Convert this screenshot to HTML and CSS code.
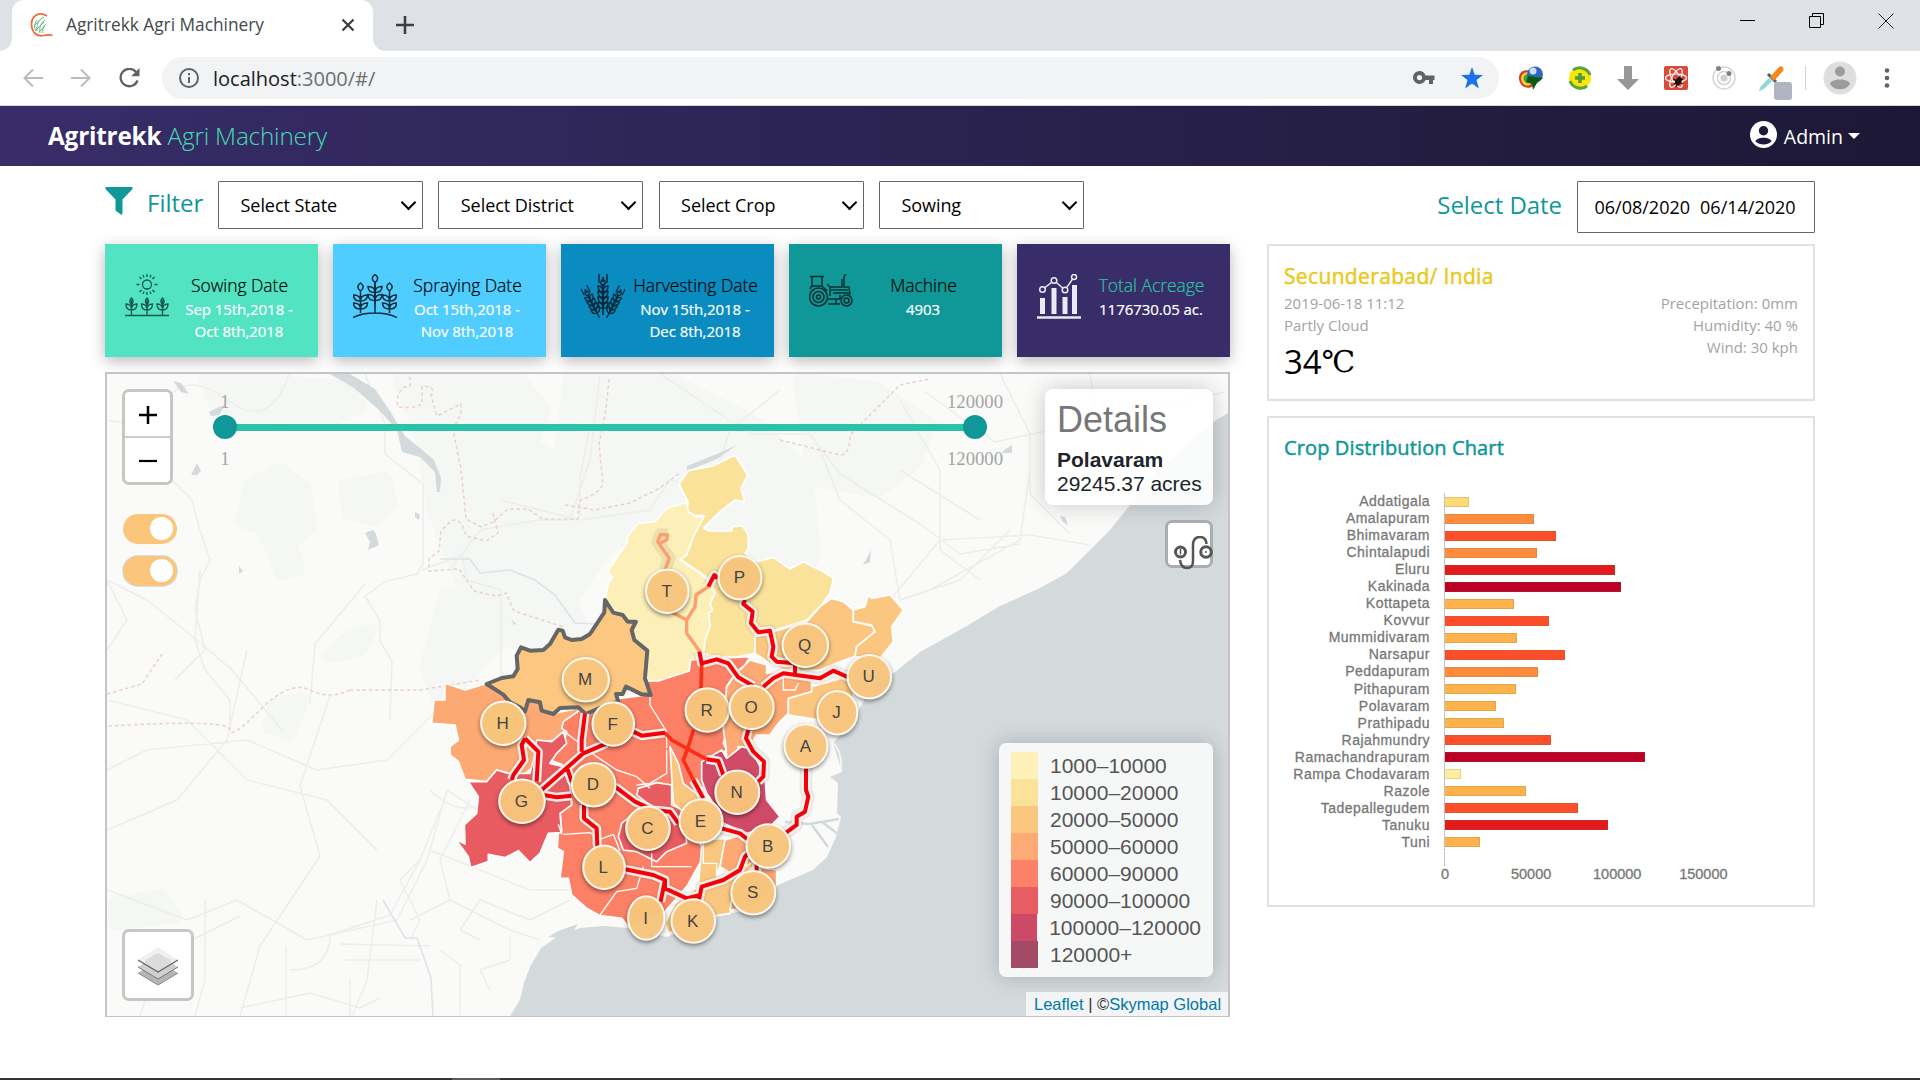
FILE: index.html
```html
<!DOCTYPE html>
<html lang="en">
<head>
<meta charset="utf-8">
<title>Agritrekk Agri Machinery</title>
<link rel="stylesheet" href="styles.css">
</head>
<body>
<div class="tabstrip">
  <div class="tab">
    <svg class="favicon" width="24" height="26" viewBox="0 0 24 26" fill="none"><path d="M17 4C9-1 1 4 1.500 13c.5 8 6 12 12 10.500 4-1 6-1 9 0" stroke="#f0693c" stroke-width="1.800"/><path d="M14 5c-5 2-8 8-7 14M15 8c-4 3-6 7-5 13M16 12c-3 2-4 5-3 9M7 8c-3 4-3 8-1 11M12 6l-7 7M14 10l-8 8M15 14l-6 6" stroke="#62b982" stroke-width="1"/></svg>
    <span class="tab-title">Agritrekk Agri Machinery</span>
    <svg class="tab-close" width="14" height="14" viewBox="0 0 14 14"><path d="M1.500 1.500l11 11M12.500 1.500l-11 11" stroke="#3c4043" stroke-width="2.300"/></svg>
  </div>
  <svg class="newtab" width="18" height="18" viewBox="0 0 18 18"><path d="M9 0v18M0 9h18" stroke="#3c4043" stroke-width="2.600"/></svg>
  <div class="winbtns">
    <svg width="16" height="16" viewBox="0 0 16 16"><path d="M0 7.500h15" stroke="#000"/></svg>
    <svg width="16" height="16" viewBox="0 0 16 16" fill="none" stroke="#000"><path d="M.5 3.500h11v11H.5zM3.500 3.500v-3h11v11h-3"/></svg>
    <svg width="16" height="16" viewBox="0 0 16 16"><path d="M.5.5l15 15M15.500.5l-15 15" stroke="#222"/></svg>
  </div>
</div>
<div class="toolbar">
  <svg class="nav-ic" width="20" height="20" viewBox="0 0 20 20" fill="none" stroke="#b9bbbe" stroke-width="2"><path d="M20 10H2M10 1.500L1.500 10l8.500 8.500"/></svg>
  <svg class="nav-ic" width="20" height="20" viewBox="0 0 20 20" fill="none" stroke="#b9bbbe" stroke-width="2"><path d="M0 10h18M10 1.500L18.500 10 10 18.500"/></svg>
  <svg class="nav-ic" width="21" height="20" viewBox="0 0 21 20"><path d="M17.200 4.200A8.700 8.700 0 1 0 18.500 12.500" fill="none" stroke="#5f6368" stroke-width="2.300"/><path d="M20.500 0v8.300h-8.300z" fill="#5f6368"/></svg>
  <div class="omnibox">
    <svg width="22" height="22" viewBox="0 0 22 22"><circle cx="11" cy="11" r="9" fill="none" stroke="#5f6368" stroke-width="2"/><path d="M11 10v6M11 6v2.200" stroke="#5f6368" stroke-width="2"/></svg>
    <span class="url">localhost<i>:3000/#/</i></span>
    <svg class="key" width="22" height="14" viewBox="0 0 22 14"><path fill="#5f6368" fill-rule="evenodd" d="M6.500 0a6.500 6.500 0 0 1 6 4.500H21.500v4.500H20v4h-4v-4h-3.500A6.500 6.500 0 1 1 6.500 0zm0 4a2.600 2.600 0 1 0 0 5.200 2.600 2.600 0 0 0 0-5.200z"/></svg>
    <svg class="star" width="22" height="22" viewBox="0 0 22 22"><path fill="#1a73e8" d="M11 0l2.700 7.700 8.300.3-6.500 5 2.300 8.500L11 16.500 4.200 21.500 6.500 13 0 8l8.300-.3z"/></svg>
  </div>
  <div class="exts">
    <svg width="26" height="26" viewBox="0 0 26 26"><path d="M1 13c0-7 7-10 13-6l2 13c-5 6-15 2-15-7z" fill="#d43c2e"/><path d="M3 13c1-6 7-7 10-4v10c-4 4-10 0-10-6z" fill="#f4d42a"/><path d="M5.500 13c1-4 5-5 8-3v7c-4 3-8 0-8-4z" fill="#3ba43a"/><circle cx="17" cy="9.500" r="8" fill="#2f68c0"/><circle cx="15" cy="6" r="3.500" fill="#c8e0f5"/><path d="M10 11l15 2-6 5-4 7-1-6-6-2z" fill="#0c5a12"/></svg>
    <svg width="24" height="24" viewBox="0 0 24 24"><circle cx="12" cy="12" r="11" fill="#fbe60a"/><path d="M5 4A11 11 0 0 1 22 9M2 15a11 11 0 0 0 17 5" fill="none" stroke="#5aa43f" stroke-width="3"/><path d="M12 7v10M7 12h10" stroke="#4b9a3c" stroke-width="3.500"/></svg>
    <svg width="24" height="24" viewBox="0 0 24 24"><path d="M8 0h8v13h7L12 24 1 13h7z" fill="#979797"/></svg>
    <svg width="24" height="24" viewBox="0 0 24 24"><rect width="24" height="24" rx="2" fill="#da4a3b"/><g fill="none" stroke="#fff" stroke-width="1.200"><ellipse cx="12" cy="12" rx="10.500" ry="4"/><ellipse cx="12" cy="12" rx="10.500" ry="4" transform="rotate(60 12 12)"/><ellipse cx="12" cy="12" rx="10.500" ry="4" transform="rotate(120 12 12)"/></g><ellipse cx="14.500" cy="15" rx="3" ry="4.500" transform="rotate(30 14 15)" fill="#1b1110"/><path d="M9 13l10 5M10 18l9-5M12 21l4-11" stroke="#1b1110" stroke-width="1.200"/></svg>
    <svg width="24" height="24" viewBox="0 0 24 24"><circle cx="12" cy="12" r="11" fill="none" stroke="#d5d6d8" stroke-width="1.500"/><circle cx="12" cy="12" r="6.500" fill="none" stroke="#d5d6d8" stroke-width="1.500"/><circle cx="12" cy="12" r="3.500" fill="#cfd1d3"/><circle cx="6.500" cy="2.500" r="2.500" fill="#7f8285"/><circle cx="17" cy="7.500" r="2.500" fill="#7f8285"/></svg>
    <svg width="34" height="34" viewBox="0 0 34 34"><path d="M1 25c1-5 4-7 10-13l3 3c-6 6-8 9-13 10z" fill="#8fd9d6"/><path d="M10 8l8 8" stroke="#41617c" stroke-width="3"/><path d="M12 11l9-10c2-2 6 1 4 4l-9 10z" fill="#f5871f"/><rect x="16" y="16" width="18" height="18" rx="3" fill="#b0b5c1"/></svg>
  </div>
  <span class="tb-sep"></span>
  <svg class="avatar" width="34" height="34" viewBox="0 0 34 34"><circle cx="17" cy="17" r="16.500" fill="#dedede"/><circle cx="17" cy="10.500" r="5" fill="#9c9c9c"/><path d="M7 23c1-6 19-6 20 0-4 7-16 7-20 0z" fill="#9c9c9c"/></svg>
  <svg class="dots" width="6" height="20" viewBox="0 0 6 20" fill="#5f6368"><circle cx="3" cy="2.500" r="2.300"/><circle cx="3" cy="10" r="2.300"/><circle cx="3" cy="17.500" r="2.300"/></svg>
</div>
<header class="appbar">
  <div class="brand"><b>Agritrekk</b> <span>Agri Machinery</span></div>
  <div class="admin">
    <svg width="27" height="27" viewBox="0 0 27 27"><circle cx="13.500" cy="13.500" r="13.500" fill="#fff"/><circle cx="13.500" cy="9.700" r="4.700" fill="#1f1a3c"/><path d="M5.500 20.500c1-5 15-5 16 0-4 4-12 4-16 0z" fill="#1f1a3c"/></svg>
    <span>Admin</span><i class="caret"></i>
  </div>
</header>
<main class="page">
  <section class="left">
    <div class="filters">
      <svg class="funnel" width="28" height="28" viewBox="0 0 28 28"><path fill="#109898" d="M1.500 0h25c1.500 0 1.500 1.500.8 2.300L17.500 12.500v14c0 1-1 1.500-2 .8l-4-3c-.7-.5-1-.8-1-1.800v-10L.7 2.300C0 1.500 0 0 1.500 0z"/></svg>
      <span class="flabel">Filter</span>
      <div class="select">Select State</div>
      <div class="select">Select District</div>
      <div class="select">Select Crop</div>
      <div class="select">Sowing</div>
    </div>
    <div class="cards">
      <div class="card sow">
        <svg width="44" height="44" viewBox="0 0 44 44" fill="none" stroke="#17584b" stroke-width="1.300"><circle cx="22" cy="10.500" r="4.500"/><path d="M22 0v3M22 18v3M11.500 10.500h3M29.500 10.500h3M14.500 3l2 2M27.500 16l2 2M29.500 3l-2 2M16.500 16l-2 2M18 1l1 2.500M26 1l-1 2.500M18 20l1-2.500M26 20l-1-2.500"/><g id="sprout"><path d="M6.500 41V26M6.500 36c-4 0-5.500-2-5.500-6 4 0 5.500 2 5.500 6zM6.500 36c4 0 5.500-2 5.500-6-4 0-5.500 2-5.500 6zM6.500 31c-2.500-3-2-5 0-7 2 2 2.500 4 0 7z"/></g><use href="#sprout" x="15.500"/><use href="#sprout" x="31"/><path d="M0 41.500h44"/></svg>
        <div class="ctext"><h4>Sowing Date</h4><p>Sep 15th,2018 -<br>Oct 8th,2018</p></div>
      </div>
      <div class="card spray">
        <svg width="44" height="44" viewBox="0 0 44 44" fill="none" stroke="#0b2a3a" stroke-width="1.500"><path d="M0 43.500c12-6 32-6 44 0M22 39V9"/><g id="stalk"><path d="M7.500 39V17M7.500 17c-4-3-3-6 0-8 3 2 4 5 0 8zM7.500 27c-5 0-7-2-7-6 5 0 7 2 7 6zM7.500 27c5 0 7-2 7-6-5 0-7 2-7 6zM7.500 35c-5 0-7-2-7-6 5 0 7 2 7 6zM7.500 35c5 0 7-2 7-6-5 0-7 2-7 6z"/></g><use href="#stalk" x="29"/><use href="#stalk" x="14.500" y="-8.500"/></svg>
        <div class="ctext"><h4>Spraying Date</h4><p>Oct 15th,2018 -<br>Nov 8th,2018</p></div>
      </div>
      <div class="card harvest">
        <svg width="44" height="44" viewBox="0 0 44 44" fill="none" stroke="#05283a" stroke-width="1.500"><g id="ear"><path d="M22 41V10M18 0v9M22 3v5M26 0v9M22 12c-3-2-3-5 0-7 3 2 3 5 0 7z"/><path id="grain" d="M22 18c-4 0-5-2-5-6 4 0 5 2 5 6 0-4 1-6 5-6 0 4-1 6-5 6z"/><use href="#grain" y="5.500"/><use href="#grain" y="11"/><use href="#grain" y="16.500"/></g><use href="#ear" transform="translate(-4 5) rotate(-27 22 38) scale(.85) translate(4 5)"/><use href="#ear" transform="translate(4 5) rotate(27 22 38) scale(.85) translate(4 5)"/></svg>
        <div class="ctext"><h4>Harvesting Date</h4><p>Nov 15th,2018 -<br>Dec 8th,2018</p></div>
      </div>
      <div class="card machine">
        <svg width="44" height="44" viewBox="0 0 44 44" fill="none" stroke="#062f2f" stroke-width="1.500"><circle cx="9.500" cy="23" r="9"/><circle cx="9.500" cy="23" r="5.500"/><circle cx="9.500" cy="23" r="2"/><circle cx="37.500" cy="26.500" r="5.500"/><circle cx="37.500" cy="26.500" r="2.500"/><path d="M1 2.500h14M3 3v9l-2 3M13 3v10M3 12h10l5 5M18 10l3 3v9M21 13h19l1 8M22 16h17M24 19h16M33 12V5M35 12V5c0-3 0-3 2-5M18 25h13M19 30h12M27 25v5M31 21v4"/></svg>
        <div class="ctext"><h4>Machine</h4><p>4903</p></div>
      </div>
      <div class="card acre">
        <svg width="44" height="45" viewBox="0 0 44 45"><path d="M0 43.500h44" stroke="#e9eaf2" stroke-width="2.500"/><path d="M3 24h5v16H3zM14.500 14h5v26h-5zM25.500 23h5v17h-5zM35 11h5v29h-5z" fill="#e9eaf2"/><path d="M5.500 15.500L17 6.500l11 9.500 9-13" fill="none" stroke="#e9eaf2" stroke-width="1.400"/><g fill="#382d69" stroke="#e9eaf2" stroke-width="1.500"><circle cx="5.500" cy="15.500" r="2.800"/><circle cx="17" cy="6.500" r="2.800"/><circle cx="28" cy="16" r="2.800"/><circle cx="37" cy="3" r="2.500"/></g></svg>
        <div class="ctext"><h4>Total Acreage</h4><p>1176730.05 ac.</p></div>
      </div>
    </div>
    <div class="map">
      <svg class="mapsvg" width="1121" height="642" viewBox="107 374 1121 642">
        <rect x="107" y="374" width="1121" height="642" fill="#fafaf8"/>
        <!-- vegetation tint -->
        <g fill="#f5f7f5" stroke="#f5f7f5" stroke-width="14" stroke-linejoin="round">
          <path d="M205 380h60l80 8 15 18-30 14-50 5-60-10zM400 380h120l24 30-12 36 50 24 18 86-30 46 18 36-30 26-44-22-50-54-30-78-10-66z"/>
          <path d="M250 485l30-15 24 17 6 40-20 16 8 26-16 4-18-44-22-8zM345 486l40-7 6 26-16 14-26-6zM570 380h100l80 40 56 50 8 84-18 50-50 6-40-54-80-18-36 20-36-44zM800 380l74 8 56 36-16 40-36 26-64-10zM115 904l46-8 14 20-60 8zM345 640l25-10-10 20-30 6zM445 596l50-10 18 44-54 54-18 26-14-44zM275 705l28-6-14 34-20-6z"/>
        </g>
        <!-- background roads -->
        <g fill="none" stroke="#ededec" stroke-width="1.500" stroke-linejoin="round">
          <path d="M107 420q40 10 60-20t60 0 60-20 40-6M107 580l40 20 50 40 35 30 50 60M107 580l20 40-20 30M172 480l20 20 8 30 10 30-10 20-5 30 10 40-30 30M200 570l-5 70 10 30 25 30 0 30M365 374l20 50 0 30 38 30 0 80-6 10-30 7-22 15 15 25 0 20 12 20-2 60M365 584l-50 60-5 60M422 570l40-15 5 25 34 10 0 100"/>
          <path d="M450 570l30-40 60-10 30 0 20-60 10-86M500 500l80 20 70-10 20-30 40 10 20-60 50-40M580 517l0-40 10-50M660 374l90 60 60 0 30 40 80 50 40 30 60-10M900 400l40 70 0 80 40 30M890 600l50-60 90-5 60 10M980 520l-80-50M1030 470l-10 70-90 50M1000 374l30 60 0 60 40 40M1090 374l10 60 60 20M820 450l20 50 50 40 10 60 60-20 50-50M925 392l70 50 230-50"/>
          <path d="M107 700l80 20 60 60 80 20 50 50M107 830l70-30 50-60 20-90M107 890l80 30 50-20 70 40 90-20 30-60 20-70 30 20M140 1016l20-60 80-40M240 1016l20-70 60-90-20-70 30-90M205 900l0 80-10 36M290 970q40 0 40-35l60-20 30-55 20-50M286 1016l0-70M340 944l90 2M345 960l75 0M240 1008l70-15 50 15 20-10M350 980l0 36M377 900l-10 80-15 36M440 950l20 15 0 50M410 920l40-20 60 30 30 10M107 770l40-20 100-10 70 30 70-10 60-60M480 940l-20-10 20-30 50 20 40-20M420 860l-20 20 20 40-10 20"/>
          <path d="M430 850l100 40 60 0M470 800l-30 60 10 40M490 990l-10-20 30-10 0-25M430 790q30 30 60 10l60-20"/>
        </g>
        <path d="M383 900l22 38 12 0 14 40 2 38M440 559l30 0 10 14 30-3 25 10 20 15 20 28 50 2" fill="none" stroke="#dfe3e6" stroke-width="1.600"/>
        <!-- state boundary -->
        <g fill="none" stroke="#eccfd3" stroke-width="1.500" stroke-dasharray="3.500 2.800">
          <path d="M409 377q5 10-4 10-10 6-7 20 20 2 24-4l0-17q15 0 9 10l6 20 24-12 0 10-8 15 8 40 5 50 15 8 12-5 15-13 20 0 15 10 35 0q0-20 5-20 15-5 20-15l-4-40 7-35 3-30"/>
          <path d="M493 513l5 20-12 8-20-5q-5-20-15-15l-10 10-2 20-10 8 0 12 30-2 15 22 22 5 10-3 8 18 50 16M565 505l30 5 35-7 30-15 20-15M780 440l60 15q10 0 10-20l50-50 30-6M107 694l35-10 20-30"/>
          <path d="M350 690q-20 10-40 0t-50 20-30 20-100-5-23-3M350 690l70 0 60-10"/>
        </g>
        <g fill="#d4dadc">
          <path d="M330 374l20 0 25 15 15 22 15 25 15 12 14 12 7 18-1 14-3 0-2-20-15-15-18-5-5-22-18-20-25-22z"/>
          <path d="M365 533l8-3 3 4 3 11-11 5 2-8zM191 475l6-12 4 8-4 4zM173 381l8 2 8 11-8-2zM209 412l10-5 6-2-6 10-8 1zM239 566l4 5-4 3zM415 512l5 3-1 5-4-3zM511 619l5 5-2 1zM868 556l3-6-1 12-7 3zM1004 450l8-5 0 8-10 0zM687 466l30-12 20-9-20 14-30 12zM1060 516l5 1 3 8-5-3z"/>
          <path d="M1228 413L1213 422 1183 448 1147 480 1130 505 1110 530 1083 557 1067 573 1040 588 1000 606 965 627 920 652 895 672 869 690 853 722 833 743 842 772 830 777 838 783 837 813 841 817 836 837 827 857 813 870 778 885 753 910 730 913 710 918 667 937 627 928 605 926 580 928 557 937 541 948 530 967 524 983 520 1000 510 1016 1228 1016z"/>
          <path d="M548 937l10-6 20-7-4 6 8-1-22 9z"/>
        </g>
        <path d="M785 822l24 2 30-5M812 825l16 22M822 822l16 12" fill="none" stroke="#d4dadc" stroke-width="2.500"/>
        <path d="M833 743q9 7 8 28" fill="none" stroke="#f4f4f2" stroke-width="2"/>
        <!-- mandals -->
        <g transform="translate(420 440) scale(.33333)" stroke="#fff" stroke-width="5" stroke-linejoin="round">
          <path fill="#fae29b" d="M945 45l38 60-20 40 11 40-29-5-45 35-50 50 20 8 65 0 3-13 30-2 17 27 0 40-10 15 35 25 50-13 50 35 40-22 60 30 30 20-10 45-30 40-40 40-155 50 0 50-60 12-75-5-25-10 10-40 15-40-5-40 5-30 15-30-20-40-25-20-60-40 20-15 20-55 32-60-27 0-25-15 5-25-28-55 28-40 75-15z"/>
          <path fill="#fcefb7" d="M800 187l5 28 20 15 27 0-32 60-20 55-20 15 60 40 25 20 20 40-15 30 8 20-13 10 5 40-15 40-5 60-40 5-2 30-93 30-35-5 5-90-45-30-5-30 13-25-28 0-65-65 10-50 13-18-15-17 57-85 2-20 33-40 50-5 35-40z"/>
          <path fill="#fda973" d="M75 730L135 750 200 730 250 762 315 812 325 782 360 785 400 820 500 800 440 850 435 880 400 900 385 905 350 985 340 980 300 1015 265 1000 230 990 200 1025 135 1018 115 965 90 945 90 920 115 900 105 855 35 850 42 780 75 780z"/>
          <path fill="#fc8066" d="M600 775l80-10 10 0-10-42 35 0 93-30 4-33 68-4 110-6-15 25-30 25-25 40 0 130-10 40 10 20-70 40 0 70-30 40 30 130-5 50-45 80-65 75-110 45-20-25-65-8-40-22-45-40-10-50-25 0 10-80-18-10 3-47 10-8-5-55 35-25-5-55-20-60-40-15 40-45 10-40-15-10 5-20 50-35z"/>
          <path fill="#e85c61" d="M145 1025L200 1025 230 990 265 1000 330 1000 345 940 350 900 395 905 430 875 440 910 410 940 390 970 430 980 450 1040 455 1095 420 1120 425 1178 385 1180 360 1240 330 1268 295 1232 255 1253 205 1243 205 1265 152 1283 145 1250 107 1198 135 1212 133 1155 170 1120 175 1070z"/>
          <path fill="#e85c61" d="M655 1045l55-17 45 7 0 60 35 15 10 100-60 25-30 30-60-30-40-5-15-40 10-40 35-30 50-25-40-30z"/>
          <path fill="#fda973" d="M920 740l25-35 45-45 50 15 0 25 60-10 75 35 0 30-70 25 0 40-30 30-25 35-40 0-25 40-30-5-10 30-25 5-2-35-8-50z"/>
          <path fill="#fbc780" d="M1005 590l55-15 100-30 40-45 35-25 35 10 30 25 0 35 65 15-5 20-50 40-5 30-45 15-60 25-100 5-50-25-45-30z"/>
          <path fill="#fbc780" d="M1300 510l35-10 10-35 10 10 55-10 40 45-35 50 5 45-40 50-75-5 5-30 55-45-10-20-55-10z"/>
          <path fill="#fbc780" d="M1175 740l105-30 20 40 0 80-100 10-95-15 0-50 70-20z"/>
          <path fill="#d04a67" d="M845 965l60-35 15 25 45-35 20 5 25 35 25 50 5 70 40 50-30 30-70 20-70-30-30-60-20-30-15-40z"/>
          <path fill="#fbc780" d="M750 920l25 50 15 60 50 40 10 30 0 100 70-5 0 25-15 45-15 40 70-15 50-70 15 60-75 80-20 60-60 10-125 50-10-30 30-60 70-50 10-120-50-100-35-30z"/>
          <path fill="#fda973" d="M915 1200l65-20 40 70-80 55-40-25zM930 1410l10-60 60-70 70 10 0 45-70 65z"/>
          <path fill="none" stroke-width="4" d="M690 765l0 30 50 80 0 50M440 880l90 70 60 40 60 20 40 35M740 930l0 70-50 30-40 5M430 1183l80-5 30 20 40-15 20 50M695 1240l0 40 120 0M540 1425l50-70 60-10 20-65M425 1183l-10-30M850 1210l0 60 40 0 0 40 50-10M1090 700l0 50 35 0 10-20M1250 700l10-30 30-15 0 40"/>
          <path fill="#fcc780" stroke="#666" stroke-width="12" d="M555 480l25 38 28 7 15 20 25 0-13 25 8 30 39 32-7 83 17 50-27-2-47-23-10 22-20 0 7 23-35 10-63 27-22-20-55 2-20 18-35-10-5-25-35-7-10 34-15-12-30-15-20-23-50-32 45-18 35-5 13-22-3-40 13-25 27 10 40-2 20-18 25-43 13 3 7 20 20 8 30-3 25-15 43-65z"/>
        </g>
        <!-- routes: halo, casing, line -->
        <defs><path id="routes" d="M865 440l18-35 10 10M975 480l-5 12 28 23-5 35 22 27 35-5 10 48-5 30 15 15 55 5 0 30M1285 712l-45-20-40 23-110-15-30 15-30 25M838 635l7 35 45-12 35 12 30 42 45 26M640 875l25 12 70-9M860 958l35 5 15 42M985 870l-7 25 22 40 32 30-2 45-15 15M1158 980l0 70 7 20-10 45-25 15 0 25-35 25M495 820l-10 80 0 35M560 910l-70 30-125 110M315 895l-10 20 7 45-32 45-5 15M315 895l40 40-5 90M370 1065l40 7 45-5M440 980l15 45M585 1040l60 45 55 25 50 5 25 35M492 1095l0 40 38 30 2 55M615 1288l85 17 35 15 0 25 65 30 40-10M735 1320l-13 65M835 1390l10-50 65-20 50-30 15-40 10-10M1010 1250l0 45M905 1165l55 15 25 20M820 1020l30 55"/></defs>
        <g transform="translate(420 440) scale(.33333)" fill="none" stroke-linejoin="round">
          <g stroke="#8d7f6b" stroke-opacity=".14" stroke-width="38"><use href="#routes"/><path d="M735 390l13-35-35-50 9-22 21 2"/></g>
          <g stroke="#f4f0ee" stroke-opacity=".95" stroke-width="27"><use href="#routes"/></g>
          <path stroke="#fa9f6d" stroke-width="10" d="M735 390l13-35-35-50 9-22 21 2-3 15-20 10M740 460l3 50 57 30 25-40 3-35 37-25M800 540l0 40 40 55M895 415l40-35 30-5 10 50 0 50"/>
          <path stroke="#fb2e18" stroke-width="11" d="M845 670l-2 75M735 878l20 22 45 25 60 33M820 870l-15 50-15 40 30 60"/>
          <g stroke="#f50008" stroke-width="12"><use href="#routes"/></g>
        </g>
        <g id="markers"></g>
      </svg>
      <div class="zoomctl"><span><svg width="18" height="18"><path d="M9 0v18M0 9h18" stroke="#000" stroke-width="2.500"/></svg></span><span><svg width="18" height="18"><path d="M0 9h18" stroke="#000" stroke-width="2.200"/></svg></span></div>
      <div class="toggle t1"></div><div class="toggle t2"></div>
      <div class="slider"><i></i><i></i><span class="lo">1</span><span class="hi">120000</span><span class="lo dn">1</span><span class="hi dn">120000</span></div>
      <div class="details"><h3>Details</h3><b>Polavaram</b><p>29245.37 acres</p></div>
      <div class="routebtn"><svg width="40" height="34" viewBox="0 0 40 34" fill="none" stroke="#555" stroke-width="3"><path d="M7 24q1 8 7 8 6 0 6-7V9q0-8 7-8 6 0 6.500 7" stroke-width="2.500"/><circle cx="7.500" cy="16" r="5"/><circle cx="33" cy="16" r="5.300"/><path d="M7.500 12.500v6M32 16h2" stroke-width="1.500"/></svg></div>
      <div class="legend" id="legend"></div>
      <div class="layers"><svg width="40" height="40" viewBox="0 0 40 40"><path d="M0 26L20 14 40 26 20 38z" fill="#b5b5b5"/><path d="M0 26l20 12 20-12" fill="none" stroke="#888"/><path d="M0 20L20 8 40 20 20 32z" fill="#cfcfcf"/><path d="M0 20l20 12 20-12" fill="none" stroke="#777"/><path d="M0 13L20 0 40 13 20 25z" fill="#f0f0f0"/><path d="M7 13L20 6l13 7v3L20 25 7 16z" fill="#dcdcdc"/><path d="M0 13l20 12 20-12" fill="none" stroke="#666" stroke-width="1.400"/></svg></div>
      <div class="attrib"><a>Leaflet</a> | ©<a>Skymap Global</a></div>
    </div>
  </section>
  <section class="right">
    <div class="daterow"><span class="flabel">Select Date</span><div class="dateinput"><span>06/08/2020</span><span>06/14/2020</span></div></div>
    <div class="panel weather">
      <h2>Secunderabad/ India</h2>
      <div class="wrow"><div>2019-06-18 11:12<br>Partly Cloud</div><div class="wr">Precepitation: 0mm<br>Humidity: 40 %<br>Wind: 30 kph</div></div>
      <div class="temp">34<span>℃</span></div>
    </div>
    <div class="panel chart">
      <h2>Crop Distribution Chart</h2>
      <div class="rows" id="rows"></div>
      <div class="xaxis"><i></i><span>0</span><span>50000</span><span>100000</span><span>150000</span></div>
    </div>
  </section>
</main>
<footer class="taskbar"><i></i></footer>
<script src="app.js"></script>
</body>
</html>
```
FILE: styles.css
```css
* { box-sizing: border-box; }
body { margin: 0; width: 1920px; height: 1080px; overflow: hidden; background: #fff; display: flex; flex-direction: column; font-family: "Open Sans", "Noto Sans", sans-serif; color: #000; }
h2, h3, h4, p { margin: 0; font-weight: 400; }
svg { display: block; flex: none; }
.tabstrip { height: 51px; background: #dee1e6; display: flex; align-items: center; padding-left: 12px; flex: none; }
.tab { position: relative; width: 361px; height: 51px; background: #fff; border-radius: 12px 12px 0 0; display: flex; align-items: center; padding: 0 18px 1px; }
.tab::before, .tab::after { content: ""; position: absolute; bottom: 0; width: 12px; height: 12px; }
.tab::before { left: -12px; background: radial-gradient(circle at 0 0, transparent 11.5px, #fff 12px); }
.tab::after { right: -12px; background: radial-gradient(circle at 100% 0, transparent 11.5px, #fff 12px); }
.tab-title { margin: -2px 0 0 12px; font-size: 17.300px; letter-spacing: 0; color: #45494d; white-space: nowrap; }
.tab-close { margin-left: auto; }
.newtab { margin: -1px 0 0 23px; }
.winbtns { margin-left: auto; display: flex; gap: 53px; padding: 0 26px 9px 0; }
.toolbar { height: 55px; flex: none; display: flex; align-items: center; border-bottom: 1px solid #d5d6da; padding: 0 0 1px 23px; }
.nav-ic { margin-right: 28px; }
.nav-ic:nth-child(3) { margin-right: 22px; }
.omnibox { width: 1337px; height: 42px; border-radius: 21px; background: #f1f3f4; display: flex; align-items: center; padding: 0 16px; }
.url { margin: 1px 0 0 13px; font-size: 20px; color: #202124; }
.url i { font-style: normal; color: #6b6f73; }
.key { margin-left: auto; margin-right: 26px; }
.exts { display: flex; align-items: center; margin-left: 19px; gap: 24px; height: 42px; }
.exts svg:last-child { margin: 10px 0 0 -2px; }
.tb-sep { width: 1px; height: 24px; background: #cfd1d4; margin-left: 13px; }
.avatar { margin-left: 17px; }
.dots { margin-left: 27px; }
.appbar { height: 60px; flex: none; display: flex; align-items: center; justify-content: space-between; padding: 0 60px 0 48px; background: linear-gradient(90deg, #382d69, #1c1835); color: #fff; }
.brand { font-size: 24.300px; letter-spacing: -.18px; margin-top: -1px; }
.brand b { font-weight: 700; }
.brand span { color: #47dbb4; font-weight: 300; }
.admin { display: flex; align-items: center; font-size: 19.500px; }
.admin span { margin-left: 7px; }
.admin svg { margin-top: -4px; }
.caret { margin-left: 5px; border: 6px solid transparent; border-top-color: #fff; border-bottom: 0; }
.page { display: flex; gap: 37px; padding: 15px 105px 0; flex: 1; }
.left { width: 1125px; }
.filters { display: flex; height: 48px; margin-bottom: 15px; align-items: center; }
.funnel { margin-top: -8px; }
.flabel { font-size: 24px; color: #109898; white-space: nowrap; }
.filters .flabel { margin: -6px 0 0 14px; width: 71px; }
.select { position: relative; width: 205px; height: 48px; margin-right: 15.300px; border: 1px solid #666; border-radius: 1px; padding-left: 21.500px; font-size: 18px; line-height: 47px; letter-spacing: -.05px; }
.select::after { content: ""; position: absolute; right: 8px; top: 15px; width: 9px; height: 9px; border: solid #000; border-width: 0 2.200px 2.200px 0; transform: rotate(45deg); }
.cards { display: flex; gap: 15px; margin-bottom: 15px; }
.card { width: 213px; height: 113px; padding: 30px 0 0 20px; display: flex; box-shadow: 0 4px 14px rgba(0,0,0,.28); }
.sow { background: #52e3c2; } .spray { background: #50cdff; } .harvest { background: #0b8cc0; } .machine { background: #109898; } .acre { background: #382d69; }
.ctext { width: 140px; text-align: center; white-space: nowrap; }
.ctext h4 { font-size: 17.500px; line-height: 22px; margin-bottom: 2px; letter-spacing: -.05px; padding-left: 1px; font-weight: 300; -webkit-text-stroke: .2px; }
.ctext p { font-size: 15px; line-height: 22px; color: #fff; letter-spacing: -.05px; -webkit-text-stroke: .2px; }
.acre h4 { color: #2ac3a2; }
.map { position: relative; width: 1125px; height: 645px; border: 2px solid #c3c4c4; border-bottom-width: 1px; font-family: "Liberation Sans", Arial, sans-serif; overflow: hidden; }
/* controls floating over the map canvas */
.zoomctl, .toggle, .slider, .details, .routebtn, .legend, .layers, .attrib { position: absolute; }
.zoomctl { left: 15px; top: 15px; width: 51px; height: 96px; border: 3px solid #c6c6c5; border-radius: 7px; background: #fff; }
.zoomctl span { height: 44px; display: flex; align-items: center; justify-content: center; padding-top: 2px; }
.zoomctl span + span { border-top: 2px solid #ccc; height: 46px; }
.toggle { left: 16px; width: 54px; height: 30px; border-radius: 15px; background: #fbc57b; }
.t1 { top: 140px; } .t2 { top: 182px; box-shadow: 0 0 0 1px #cfe2ee; }
.toggle::after { content: ""; position: absolute; width: 23px; height: 23px; border-radius: 50%; background: #fff; right: 4px; top: 3px; }
.slider { left: 118px; top: 50px; width: 750px; height: 7px; background: #2ac3a5; font: 18.700px "Liberation Serif", serif; color: #a3a5a5; }
.slider i { position: absolute; width: 24px; height: 24px; border-radius: 50%; background: #109898; top: -9px; left: -12px; }
.slider i + i { left: 738px; }
.slider span { position: absolute; width: 80px; text-align: center; top: -33px; line-height: 22px; left: -40px; }
.slider .hi { left: 710px; }
.slider .dn { top: 24px; }
.details { left: 938px; top: 15px; width: 168px; height: 116px; border-radius: 8px; background: rgba(255,255,255,.88); box-shadow: 0 0 22px rgba(0,0,0,.2); padding: 11px 0 0 12px; font-size: 21px; line-height: 24px; color: #212529; white-space: nowrap; }
.details h3 { font-size: 36px; line-height: 40px; color: #777; margin-bottom: 8px; }
.details b { display: block; font-size: 21px; }
.routebtn { left: 1058px; top: 146px; width: 48px; height: 48px; border: 3px solid #a9adaf; border-radius: 7px; background: #fff; }
.routebtn svg { margin: 13px 0 0 5px; }
.legend { left: 892px; top: 369px; width: 214px; height: 234px; border-radius: 7px; box-shadow: 0 0 22px rgba(0,0,0,.2); background: #f6f8f8; padding: 9px 12px; font-size: 21px; line-height: 27px; color: #555; }
.legend div { display: flex; gap: 12px; height: 27px; white-space: nowrap; }
.legend i { width: 27px; height: 27px; }
.layers { left: 15px; top: 555px; width: 72px; height: 72px; border: 3px solid #c5c6c5; border-radius: 7px; background: #fff; display: flex; align-items: center; justify-content: center; padding-top: 3px; }
.attrib { right: 0; bottom: 0; height: 24px; width: 202px; background: #f2f4f5; padding-left: 8px; font-size: 16.500px; line-height: 25px; color: #333; white-space: nowrap; }
.attrib a { color: #0078a8; }
.mk ellipse { fill: #fdca80; fill-opacity: .94; stroke: #fdf8f0; stroke-width: 2; filter: drop-shadow(0 2px 2px rgba(0,0,0,.45)); }
.mk text { font: 17px "Liberation Sans", Arial, sans-serif; fill: #444; text-anchor: middle; }
.right { width: 548px; }
.daterow { display: flex; justify-content: flex-end; height: 52px; margin-bottom: 11px; }
.daterow .flabel { line-height: 48px; margin-right: 15px; letter-spacing: -.05px; }
.dateinput { width: 238px; height: 52px; border: 1px solid #666; border-radius: 1px; padding-left: 16.500px; font-size: 18px; line-height: 51px; display: flex; gap: 10px; }
.panel { border: 2px solid #dee2e6; padding: 0 15px; }
.weather { height: 157px; margin-bottom: 15px; padding-top: 15px; }
.weather h2 { font-size: 21px; line-height: 30px; letter-spacing: .35px; color: #e9c920; margin-bottom: 1px; -webkit-text-stroke: .5px; }
.wrow { display: flex; justify-content: space-between; font-size: 15px; line-height: 22px; color: #a3a3a3; height: 44px; letter-spacing: 0; }
.wr { text-align: right; }
.temp { font-size: 33px; line-height: 46px; margin-top: 3px; display: flex; }
.temp span { font-family: "Liberation Serif", "DejaVu Serif", serif; font-size: 30px; }
.chart { height: 491px; padding-top: 16px; }
.chart h2 { font-size: 20px; line-height: 28px; letter-spacing: .12px; color: #109898; -webkit-text-stroke: .5px; }
.rows { margin: 31px 0 0 160px; border-left: 1px solid #c2c2c2; }
.rows div { height: 17.060px; display: flex; align-items: center; font: 14px/17px "Liberation Sans", Arial, sans-serif; color: #777; }
.rows span { width: 180px; margin-left: -195px; text-align: right; white-space: nowrap; margin-right: 15px; flex: none; letter-spacing: .47px; -webkit-text-stroke: .3px; }
.rows i { height: 10px; border: 1px solid rgba(110,120,80,.2); border-left: 0; flex: none; }
.xaxis { position: relative; margin-left: 118px; display: flex; font: 14.500px/16px "Liberation Sans", Arial, sans-serif; color: #777; padding-top: 15px; -webkit-text-stroke: .3px; }
.xaxis i { position: absolute; left: 42px; top: 1px; width: 1px; height: 14px; background: #c2c2c2; }
.xaxis span { width: 86.100px; text-align: center; }
.taskbar { height: 2px; background: #333; flex: none; margin-top: auto; }
.taskbar i { display: block; width: 48px; height: 2px; margin-left: 452px; background: #5c5c5c; }
```
FILE: app.js
```js
const crops = [
  ['Addatigala', 24, '#fed976'], ['Amalapuram', 89, '#fd8d3c'], ['Bhimavaram', 110.5, '#fc4e2a'],
  ['Chintalapudi', 92, '#fd8d3c'], ['Eluru', 170, '#e31a1c'], ['Kakinada', 176, '#bd0026'],
  ['Kottapeta', 69, '#feb24c'], ['Kovvur', 104, '#fc4e2a'], ['Mummidivaram', 71.5, '#feb24c'],
  ['Narsapur', 119.5, '#fc4e2a'], ['Peddapuram', 92.5, '#fd8d3c'], ['Pithapuram', 71, '#feb24c'],
  ['Polavaram', 50.5, '#feb24c'], ['Prathipadu', 59, '#feb24c'], ['Rajahmundry', 105.5, '#fc4e2a'],
  ['Ramachandrapuram', 200, '#bd0026'], ['Rampa Chodavaram', 15.5, '#ffeda0'], ['Razole', 81, '#feb24c'],
  ['Tadepallegudem', 132.5, '#fc4e2a'], ['Tanuku', 162.5, '#e31a1c'], ['Tuni', 35, '#feb24c']
];
document.getElementById('rows').innerHTML = crops.map(([n, w, c]) =>
  `<div><span>${n}</span><i style="width:${w}px;background:${c}"></i></div>`).join('');

const bands = [['1000–10000', '#fdf0b9'], ['10000–20000', '#fbe29b'], ['20000–50000', '#fbc67d'],
  ['50000–60000', '#fcab75'], ['60000–90000', '#fb8268'], ['90000–100000', '#e85d61'],
  ['100000–120000', '#cd4a66'], ['120000+', '#a24a66']];
document.getElementById('legend').innerHTML = bands.map(([t, c]) =>
  `<div><i style="background:${c}"></i><span>${t}</span></div>`).join('');

const markers = [['T', 667.3, 591.3, 21.3], ['P', 740, 577.7, 21.5], ['Q', 805.3, 645.3, 22.8], ['U', 869.3, 676.7, 21.8],
  ['M', 585.7, 679.7, 23.2], ['H', 503.3, 723.3, 22.2], ['F', 613.3, 724, 20.8], ['R', 707.3, 710, 21.8],
  ['O', 751.7, 707.3, 22], ['J', 837.3, 712.7, 20], ['A', 806, 746, 21.5], ['G', 522, 801.3, 22.8],
  ['D', 593.7, 784.7, 21.8], ['N', 737.3, 792.3, 22], ['C', 648, 828.3, 21.8], ['E', 701, 821, 21.5],
  ['B', 768.3, 846, 21.8], ['L', 604, 867.3, 20.8], ['S', 753.3, 892.7, 22], ['I', 646.3, 918, 18.2], ['K', 693.3, 921, 21.8]];
document.getElementById('markers').innerHTML = markers.map(([t, x, y, r]) =>
  `<g class="mk"><ellipse cx="${x}" cy="${y}" rx="${r}" ry="21.7"/><text x="${x - 0.7}" y="${y + 5.5}">${t}</text></g>`).join('');
```
